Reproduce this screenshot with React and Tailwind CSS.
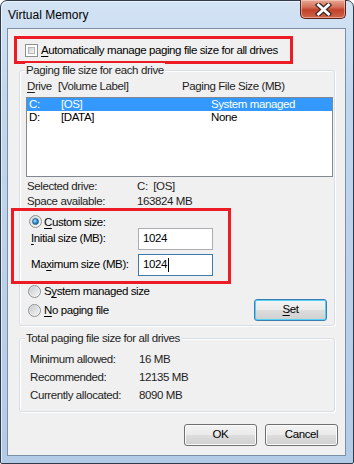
import React from "react";

const font = "font-['Liberation_Sans',Arial,sans-serif]";

function U({ children }) {
  return <span className="underline underline-offset-[2px] decoration-[1px]">{children}</span>;
}

function Checkbox() {
  return (
    <div className="w-[13px] h-[13px] border border-[#8e8f8f] bg-white p-[2px] shrink-0">
      <div className="w-full h-full border border-[#b3b7bd] bg-[linear-gradient(135deg,#cdd1d6,#f7f7f7)]" />
    </div>
  );
}

function Radio({ checked }) {
  return (
    <div className="w-[13px] h-[13px] rounded-full border border-[#8e8f8f] bg-[linear-gradient(135deg,#d4d7db,#fbfbfb)] flex items-center justify-center shrink-0">
      {checked ? (
        <div className="w-[7px] h-[7px] rounded-full border border-[#1d5f92] bg-[radial-gradient(circle_at_35%_35%,#a8dcf7,#2a8bd0_55%,#0f4f86)]" />
      ) : (
        <div className="w-[9px] h-[9px] rounded-full bg-[linear-gradient(135deg,#c8ccd1,#f3f3f3)]" />
      )}
    </div>
  );
}

function Button({ children, def, className = "" }) {
  return (
    <div
      className={
        "h-[22px] rounded-[3px] flex items-center justify-center text-black " +
        (def
          ? "border border-[#3c7fb1] shadow-[inset_0_0_0_1px_#54d2f6] "
          : "border border-[#707070] shadow-[inset_0_0_0_1px_#fcfcfc] ") +
        "bg-[linear-gradient(to_bottom,#f3f3f3_0%,#ebebeb_48%,#dddddd_52%,#cfcfcf_100%)] " +
        className
      }
    >
      {children}
    </div>
  );
}

function Input({ value, focused }) {
  return (
    <div
      className={
        "w-[75px] h-[22px] bg-white flex items-center pl-[4px] text-black " +
        (focused ? "border border-[#3d7bad]" : "border border-[#abadb3]")
      }
    >
      {value}
      {focused && <span className="w-px h-[14px] bg-black ml-[1px]" />}
    </div>
  );
}

function Group({ title, className = "", children }) {
  return (
    <div className={"border border-[#d5dfe5] rounded-[3px] shadow-[inset_1px_1px_0_#fff,1px_1px_0_#fff] " + className}>
      <div className="-mt-[8px] ml-[5px] w-fit px-[1px] bg-[#f0f0f0] leading-[14px] text-[#1e1e1e]">{title}</div>
      {children}
    </div>
  );
}

export default function App() {
  return (
    <div className={"w-[354px] h-[464px] overflow-hidden bg-white " + font}>
      <div className="w-[354px] h-[464px] border border-[#2d3b4c] rounded-t-[7px] rounded-b-[2px] bg-[linear-gradient(to_bottom,#d3e3f4_0%,#c2d7ee_20%,#b3cbe6_100%)] flex flex-col pl-[6px] pr-[7px] pb-[7px] shadow-[inset_1px_1px_0_rgba(255,255,255,0.6)]">
        {/* Title bar */}
        <div className="h-[27px] flex items-start justify-between shrink-0">
          <div className="mt-[7px] ml-[1px] text-[12px] leading-[15px] text-black">Virtual Memory</div>
          <div className="w-[46px] h-[19px] -mt-px rounded-b-[5px] border border-[#5a2319] border-t-0 bg-[linear-gradient(to_bottom,#e8a897_0%,#d46f56_40%,#c2412a_55%,#d1664c_100%)] shadow-[inset_0_0_0_1px_rgba(255,220,210,0.5)] flex items-center justify-center">
            <svg width="17" height="13" viewBox="0 0 17 13">
              <path d="M3.5 2 L13.5 11 M13.5 2 L3.5 11" stroke="#3b2a2a" strokeWidth="5.2" strokeLinecap="square" />
              <path d="M3.5 2 L13.5 11 M13.5 2 L3.5 11" stroke="#ffffff" strokeWidth="2.8" strokeLinecap="square" />
            </svg>
          </div>
        </div>

        {/* Client area */}
        <div className="flex-1 border border-[#7d8fa5] bg-[#f0f0f0] text-[11.5px] tracking-[-0.4px] text-black flex flex-col">
          {/* Auto manage (annotated) */}
          <div className="mt-[7px] ml-[6px] w-[279px] h-[28px] border-[3px] border-[#ed1c24] flex items-center pl-[8px]">
            <Checkbox />
            <span className="ml-[3px] leading-[14px]">
              <U>A</U>utomatically manage paging file size for all drives
            </span>
          </div>

          {/* Group 1 */}
          <Group title="Paging file size for each drive" className="mt-[6px] ml-[11px] w-[316px] h-[256px] flex flex-col">
            <div className="mt-[2px] h-[14px] leading-[14px] flex pl-[7px] text-[#1e1e1e]">
              <span className="w-[31px]"><U>D</U>rive</span>
              <span className="w-[124px]">[Volume Label]</span>
              <span>Paging File Size (MB)</span>
            </div>
            <div className="mt-[4px] ml-[6px] w-[307px] h-[80px] border border-[#828790] bg-white">
              <div className="h-[13px] bg-[#3399ff] text-white flex items-center leading-[13px] pl-[2px]">
                <span className="w-[32px]">C:</span>
                <span className="w-[150px]">[OS]</span>
                <span>System managed</span>
              </div>
              <div className="h-[13px] flex items-center leading-[13px] pl-[2px]">
                <span className="w-[32px]">D:</span>
                <span className="w-[150px]">[DATA]</span>
                <span>None</span>
              </div>
            </div>
            <div className="mt-[2px] pl-[7px] leading-[15px] text-[#1e1e1e]">
              <div className="flex"><span className="w-[110px]">Selected drive:</span><span>C:&nbsp;&nbsp;[OS]</span></div>
              <div className="flex"><span className="w-[110px]">Space available:</span><span>163824 MB</span></div>
            </div>

            {/* Custom size (annotated) */}
            <div className="-mt-px -ml-[9px] w-[220px] h-[76px] border-[3px] border-[#ed1c24] flex flex-col">
              <div className="mt-[4px] h-[13px] flex items-center pl-[15px]">
                <Radio checked />
                <span className="ml-[2px] leading-[14px]"><U>C</U>ustom size:</span>
              </div>
              <div className="h-[22px] flex items-center pl-[17px]">
                <span className="w-[107px]"><U>I</U>nitial size (MB):</span>
                <Input value="1024" />
              </div>
              <div className="mt-[4px] h-[22px] flex items-center pl-[17px]">
                <span className="w-[107px]">Ma<U>x</U>imum size (MB):</span>
                <Input value="1024" focused />
              </div>
            </div>

            <div className="flex">
              <div className="flex flex-col pl-[8px]">
                <div className="h-[14px] flex items-center">
                  <Radio />
                  <span className="ml-[3px] leading-[14px]">S<U>y</U>stem managed size</span>
                </div>
                <div className="mt-[5px] h-[14px] flex items-center">
                  <Radio />
                  <span className="ml-[3px] leading-[14px]"><U>N</U>o paging file</span>
                </div>
              </div>
              <Button def className="ml-auto mr-[7px] mt-[15px] w-[73px]">
                <span><U>S</U>et</span>
              </Button>
            </div>
          </Group>

          {/* Group 2 */}
          <Group title="Total paging file size for all drives" className="mt-[12px] ml-[11px] w-[316px] h-[74px]">
            <div className="mt-[5px] pl-[10px] leading-[18px] text-[#1e1e1e]">
              <div className="flex"><span className="w-[109px]">Minimum allowed:</span><span>16 MB</span></div>
              <div className="flex"><span className="w-[109px]">Recommended:</span><span>12135 MB</span></div>
              <div className="flex"><span className="w-[109px]">Currently allocated:</span><span>8090 MB</span></div>
            </div>
          </Group>

          {/* Buttons */}
          <div className="mt-[12px] flex justify-end gap-[8px] pr-[7px]">
            <Button className="w-[73px]">OK</Button>
            <Button className="w-[73px]">Cancel</Button>
          </div>
        </div>
      </div>
    </div>
  );
}
